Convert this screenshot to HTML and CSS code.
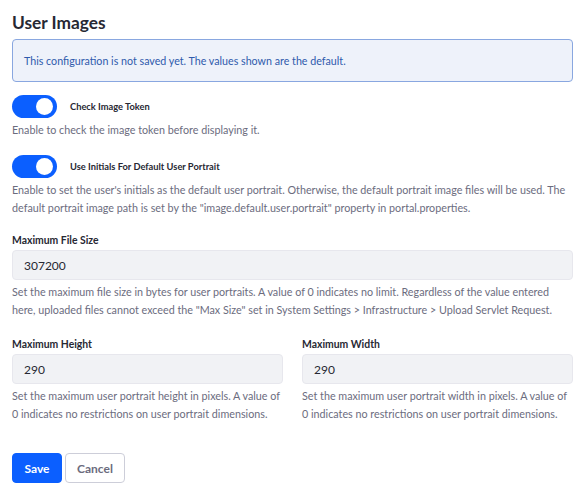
FILE: index.html
```html
<!DOCTYPE html>
<html lang="en">
<head>
    <meta charset="UTF-8">
    <meta name="viewport" content="width=device-width, initial-scale=1.0">
    <title>User Images</title>
    <link rel="stylesheet" href="styles.css">
</head>
<body>

    <div class="sheet">
        <h2 class="sheet-title">User Images</h2>

        <div class="alert-info">
            This configuration is not saved yet. The values shown are the default.
        </div>

        <form name="userimages">
            <div class="toggle-group">
                <label class="toggle-row">
                    <span class="toggle on"><span class="knob"></span></span>
                    <span class="toggle-label">Check Image Token</span>
                </label>
                <p class="help">Enable to check the image token before displaying it.</p>
            </div>

            <div class="toggle-group">
                <label class="toggle-row">
                    <span class="toggle on"><span class="knob"></span></span>
                    <span class="toggle-label">Use Initials For Default User Portrait</span>
                </label>
                <p class="help">Enable to set the user's initials as the default user portrait. Otherwise, the default portrait image files will be used. The default portrait image path is set by the "image.default.user.portrait" property in portal.properties.</p>
            </div>

            <div class="field">
                <label class="field-label">Maximum File Size</label>
                <input class="field-input" type="text" value="307200">
                <p class="help">Set the maximum file size in bytes for user portraits. A value of 0 indicates no limit. Regardless of the value entered here, uploaded files cannot exceed the "Max Size" set in System Settings &gt; Infrastructure &gt; Upload Servlet Request.</p>
            </div>

            <div class="field-row">
                <div class="field">
                    <label class="field-label">Maximum Height</label>
                    <input class="field-input" type="text" value="290">
                    <p class="help">Set the maximum user portrait height in pixels. A value of 0 indicates no restrictions on user portrait dimensions.</p>
                </div>
                <div class="field">
                    <label class="field-label">Maximum Width</label>
                    <input class="field-input" type="text" value="290">
                    <p class="help">Set the maximum user portrait width in pixels. A value of 0 indicates no restrictions on user portrait dimensions.</p>
                </div>
            </div>

            <div class="button-row">
                <button type="button" class="btn btn-primary">Save</button>
                <button type="button" class="btn btn-secondary">Cancel</button>
            </div>
        </form>
    </div>

</body>
</html>
```

FILE: styles.css
```css
/* General */
body {
    margin: 0;
    padding: 0;
    background: #fff;
    font-family: 'Lato', 'Noto Sans', sans-serif;
    color: #272833;
}

.sheet {
    padding: 12px 8px 16px 12px;
}

.sheet-title {
    margin: 0 0 5px 0;
    font-size: 17.3px;
    font-weight: 700;
    line-height: 22px;
    color: #272833;
}

/* Info alert */
.alert-info {
    background-color: #eef2fa;
    border: 1px solid #89a7e0;
    border-radius: 4px;
    color: #2e5aac;
    font-size: 10.7px;
    line-height: 16px;
    padding: 13px 11px 12px 11px;
    margin-bottom: 13px;
}

/* Toggles */
.toggle-group {
    margin-bottom: 16px;
}

.toggle-row {
    display: flex;
    align-items: center;
    gap: 13px;
}

.toggle {
    position: relative;
    width: 45px;
    height: 23px;
    border-radius: 12px;
    background-color: #cdced9;
    flex-shrink: 0;
}

.toggle.on {
    background-color: #0b5fff;
}

.toggle .knob {
    position: absolute;
    top: 3px;
    left: 3px;
    width: 17px;
    height: 17px;
    border-radius: 50%;
    background: #fff;
}

.toggle.on .knob {
    left: auto;
    right: 4px;
}

.toggle-label {
    font-size: 9.3px;
    font-weight: 700;
    color: #272833;
}

.help {
    margin: 3px 0 0 0;
    font-size: 10.75px;
    line-height: 18px;
    color: #6b6c7e;
}

/* Fields */
.field {
    margin-bottom: 18px;
    flex: 1;
}

.field-label {
    display: block;
    font-size: 10.4px;
    font-weight: 700;
    line-height: 14px;
    margin: 0 0 3px 0;
    color: #272833;
}

.field-input {
    display: block;
    box-sizing: border-box;
    width: 100%;
    height: 30px;
    padding: 0 11px;
    border: 1px solid #e7e7ed;
    border-radius: 4px;
    background-color: #f1f2f5;
    font-family: 'Lato', 'Noto Sans', sans-serif;
    font-size: 12px;
    color: #272833;
}

.field-row {
    display: flex;
    gap: 19px;
}

.field-row .field {
    margin-bottom: 0;
}

/* Buttons */
.button-row {
    display: flex;
    gap: 3px;
    margin-top: 30px;
}

.btn {
    height: 30px;
    padding: 0;
    border-radius: 4px;
    font-family: 'Lato', 'Noto Sans', sans-serif;
    font-size: 12px;
    font-weight: 700;
    cursor: pointer;
}

.btn-primary {
    width: 50px;
    background-color: #0b5fff;
    border: 1px solid #0b5fff;
    color: #fff;
}

.btn-secondary {
    width: 60px;
    background-color: #fff;
    border: 1px solid #cdced9;
    color: #6b6c7e;
}
```
